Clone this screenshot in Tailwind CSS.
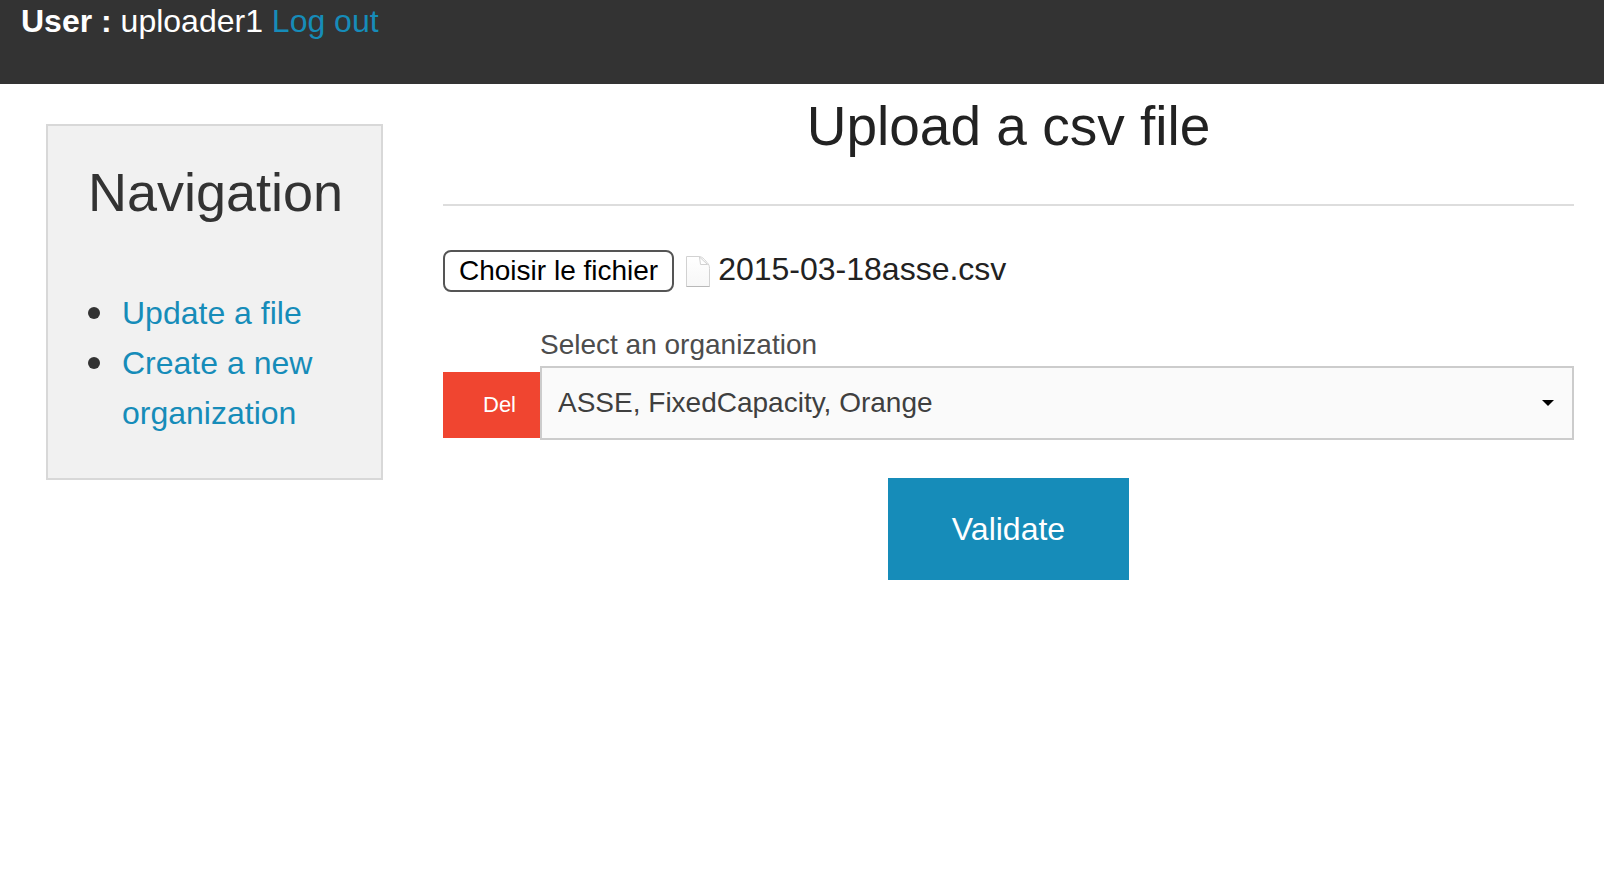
<!DOCTYPE html>
<html lang="en">
<head>
<meta charset="utf-8">
<title>Upload a csv file</title>
<script src="https://cdn.jsdelivr.net/npm/@tailwindcss/browser@4"></script>
</head>
<body class="min-h-screen bg-white font-['Liberation_Sans',Arial,sans-serif] text-[32px] leading-[50px] text-[#222222]">
<header class="bg-[#333333] px-[21px] pb-[42px] text-white">
  <p class="leading-[42px]"><strong>User :</strong> uploader1 <a href="#" class="text-[#168cb9]">Log out</a></p>
</header>
<div class="flex items-start pl-4">
  <aside class="w-1/4 px-[30px] pt-10">
    <nav class="border-2 border-[#d8d8d8] bg-[#f1f1f1] px-10 pt-7 pb-10 text-[#333333]">
      <h2 class="text-[54px] leading-[76px]">Navigation</h2>
      <ul class="mt-[58px] text-[#168cb9]">
        <li class="flex gap-[22px]"><span class="mt-[19px] size-3 shrink-0 rounded-full bg-[#333333]"></span><a href="#">Update a file</a></li>
        <li class="flex gap-[22px]"><span class="mt-[19px] size-3 shrink-0 rounded-full bg-[#333333]"></span><a href="#">Create a new organization</a></li>
      </ul>
    </nav>
  </aside>
  <main class="flex-1 px-[30px] pt-1">
    <h1 class="border-b-2 border-[#dddddd] pb-10 text-center text-[55px] leading-[76px]">Upload a csv file</h1>
    <form class="pt-11">
      <div class="flex items-start">
        <input id="csv" type="file" accept=".csv" class="sr-only">
        <label for="csv" class="rounded-lg border-2 border-[#555555] bg-white px-[14px] text-[28px] leading-[38px] text-black">Choisir le fichier</label>
        <svg class="mt-[6px] ml-3 h-8 w-6" viewBox="0 0 24 32" fill="none" aria-hidden="true">
          <defs><linearGradient id="page" x1="0" y1="0" x2="0" y2="1"><stop offset="0" stop-color="#fff"/><stop offset="1" stop-color="#f7f7f7"/></linearGradient></defs>
          <path d="M0.500 0.500H12C15 0.500 16.500 1.500 18.500 3.500L21 6.500C23 8.500 23.500 10 23.500 12.500V30.500H0.500Z" fill="url(#page)" stroke="#d2d2d2"/>
          <path d="M13.500 1L14.500 8.500H21.500Z" fill="#fff" stroke="#d2d2d2"/>
          <path d="M0.500 30.500H23.500" stroke="#b8b8b8"/>
        </svg>
        <span class="ml-2 leading-[38px]">2015-03-18asse.csv</span>
      </div>
      <div class="mt-8 flex items-end">
        <button type="button" class="mb-[2px] bg-[#f04530] pr-6 pl-10 text-[22px] leading-[66px] text-white">Del</button>
        <div class="flex-1">
          <label for="org" class="block text-[28px] leading-[42px] text-[#4d4d4d]">Select an organization</label>
          <div class="relative">
            <select id="org" class="block h-[74px] w-full appearance-none border-2 border-[#cccccc] bg-[#fafafa] px-4 text-[28px] text-[#3f3f3f]">
              <option>ASSE, FixedCapacity, Orange</option>
            </select>
            <svg class="pointer-events-none absolute top-[34px] right-5 h-[6px] w-3" viewBox="0 0 12 6" aria-hidden="true"><path d="M0 0H12L6 6Z" fill="#000"/></svg>
          </div>
        </div>
      </div>
      <div class="mt-[38px] text-center">
        <button type="submit" class="mx-auto block bg-[#168cb9] px-16 py-[26px] text-white">Validate</button>
      </div>
    </form>
  </main>
</div>
</body>
</html>
